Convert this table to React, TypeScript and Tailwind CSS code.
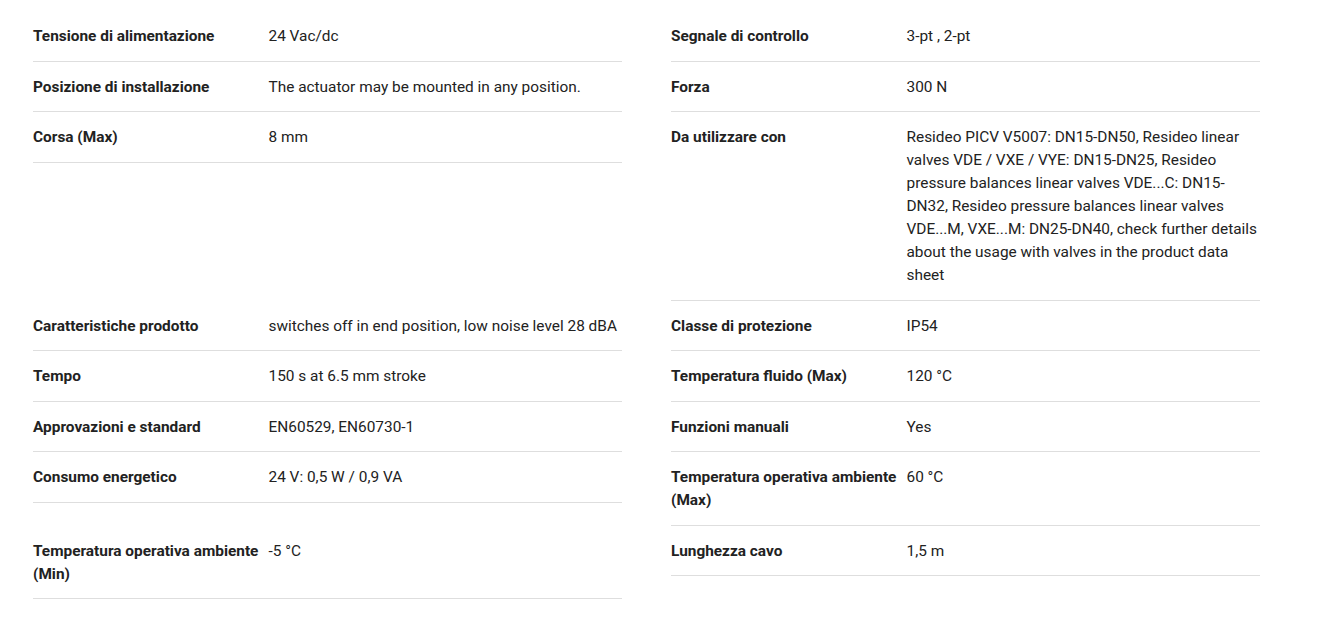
import React from 'react';

interface Spec {
  label: string;
  value: string;
}

// Ordered row by row: left cell, then right cell
const specs: Spec[] = [
  { label: 'Tensione di alimentazione', value: '24 Vac/dc' },
  { label: 'Segnale di controllo', value: '3-pt , 2-pt' },
  { label: 'Posizione di installazione', value: 'The actuator may be mounted in any position.' },
  { label: 'Forza', value: '300 N' },
  { label: 'Corsa (Max)', value: '8 mm' },
  {
    label: 'Da utilizzare con',
    value:
      'Resideo PICV V5007: DN15-DN50, Resideo linear valves VDE / VXE / VYE: DN15-DN25, Resideo pressure balances linear valves VDE...C: DN15-DN32, Resideo pressure balances linear valves VDE...M, VXE...M: DN25-DN40, check further details about the usage with valves in the product data sheet',
  },
  { label: 'Caratteristiche prodotto', value: 'switches off in end position, low noise level 28 dBA' },
  { label: 'Classe di protezione', value: 'IP54' },
  { label: 'Tempo', value: '150 s at 6.5 mm stroke' },
  { label: 'Temperatura fluido (Max)', value: '120 °C' },
  { label: 'Approvazioni e standard', value: 'EN60529, EN60730-1' },
  { label: 'Funzioni manuali', value: 'Yes' },
  { label: 'Consumo energetico', value: '24 V: 0,5 W / 0,9 VA' },
  { label: 'Temperatura operativa ambiente (Max)', value: '60 °C' },
  { label: 'Temperatura operativa ambiente (Min)', value: '-5 °C' },
  { label: 'Lunghezza cavo', value: '1,5 m' },
];

const SpecRow: React.FC<Spec> = ({ label, value }) => (
  <div className="flex items-start border-b border-[#dedede] pt-[14px] pb-[12.5px]">
    <div className="w-[235.5px] shrink-0 pr-2 font-bold">{label}</div>
    <div className="flex-1">{value}</div>
  </div>
);

export default function App() {
  return (
    <div className="min-h-screen bg-white pt-[11px] pl-[33px] font-['Roboto',sans-serif] text-[15.4px] leading-[23px] text-[#222]">
      <div className="grid grid-cols-[589px_589px] items-start gap-x-[49px]">
        {specs.map((s) => (
          <SpecRow key={s.label} label={s.label} value={s.value} />
        ))}
      </div>
    </div>
  );
}
